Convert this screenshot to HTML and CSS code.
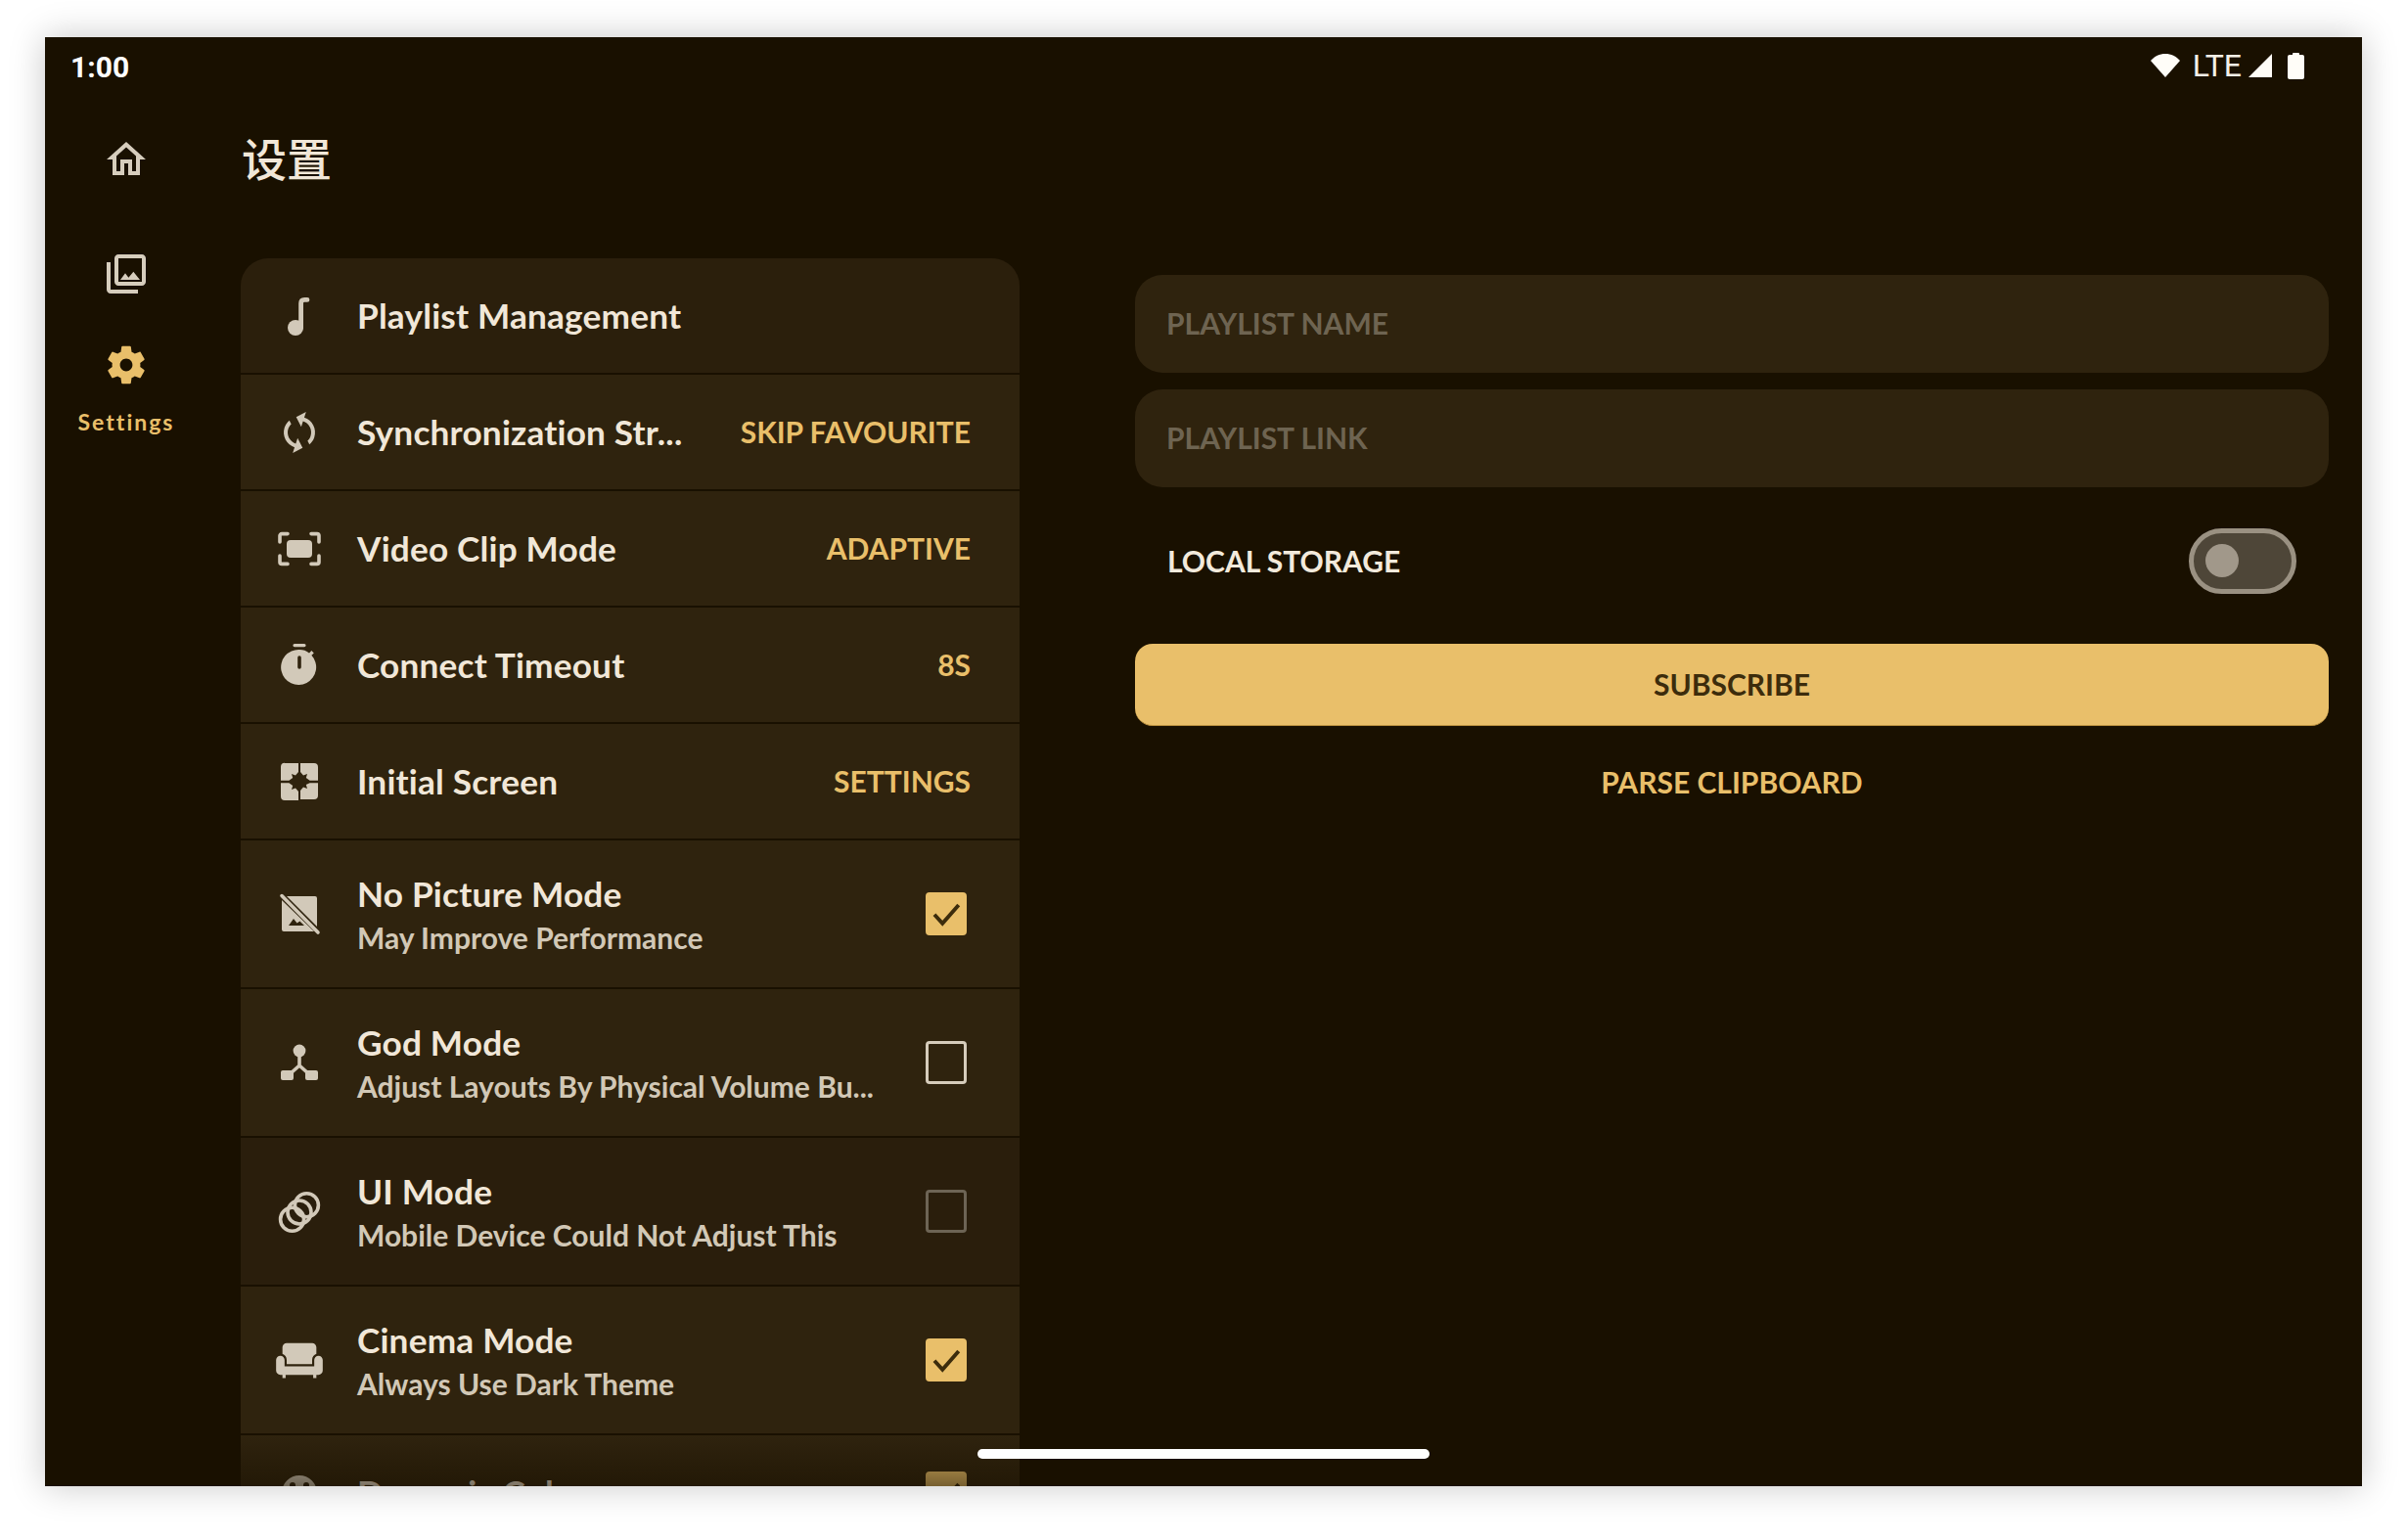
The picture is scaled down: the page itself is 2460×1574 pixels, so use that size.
FILE: index.html
```html
<!DOCTYPE html>
<html lang="zh">
<head>
<meta charset="UTF-8" />
<title>设置</title>
<link rel="stylesheet" href="styles.css">
</head>
<body>
<div class="screen">
  <div class="status">
    <span class="time">1:00</span>
    <div class="status-icons">
      <svg class="wifi" viewBox="0 0 32 26"><path d="M16 25 1 8C5 3.500 10 1 16 1s11 2.500 15 7z"/></svg>
      <span class="lte">LTE</span>
      <svg class="signal" viewBox="0 0 26 26"><path d="M25 1v24H1z"/></svg>
      <svg class="battery" viewBox="0 0 17 28"><path d="M5 2a1 1 0 0 1 1-1h5a1 1 0 0 1 1 1v1h3a2 2 0 0 1 2 2v21a2 2 0 0 1-2 2H2a2 2 0 0 1-2-2V5a2 2 0 0 1 2-2h3z"/></svg>
    </div>
  </div>

  <div class="body">
    <nav class="rail">
      <svg class="rail-icon home" viewBox="0 0 24 24"><path d="M12 5.690l5 4.500V18h-2v-6H9v6H7v-7.810l5-4.500M12 3 2 12h3v8h6v-6h2v6h6v-8h3L12 3z"/></svg>
      <svg class="rail-icon library" viewBox="0 0 24 24"><path d="M20 4v12H8V4h12m0-2H8c-1.100 0-2 .9-2 2v12c0 1.100.9 2 2 2h12c1.100 0 2-.9 2-2V4c0-1.100-.9-2-2-2zm-8.500 9.670 1.690 2.260 2.480-3.100L19 15H9zM2 6v14c0 1.100.9 2 2 2h14v-2H4V6H2z"/></svg>
      <svg class="rail-icon gear" viewBox="0 0 24 24"><path d="M19.140 12.940c.04-.3.06-.61.06-.94 0-.32-.02-.64-.07-.94l2.030-1.580c.18-.14.23-.41.12-.61l-1.920-3.320c-.12-.22-.37-.29-.59-.22l-2.390.96c-.5-.38-1.030-.7-1.620-.94l-.36-2.540c-.04-.24-.24-.41-.48-.41h-3.840c-.24 0-.43.17-.47.41l-.36 2.540c-.59.24-1.130.57-1.620.94l-2.390-.96c-.22-.08-.47 0-.59.22L2.740 8.870c-.12.21-.08.47.12.61l2.030 1.580c-.05.3-.09.63-.09.94s.02.64.07.94l-2.030 1.580c-.18.14-.23.41-.12.61l1.920 3.320c.12.22.37.29.59.22l2.390-.96c.5.38 1.030.7 1.620.94l.36 2.540c.05.24.24.41.48.41h3.840c.24 0 .44-.17.47-.41l.36-2.540c.59-.24 1.130-.56 1.620-.94l2.390.96c.22.08.47 0 .59-.22l1.920-3.320c.12-.22.07-.47-.12-.61l-2.010-1.580zM12 15.200c-1.760 0-3.200-1.440-3.200-3.200s1.440-3.200 3.200-3.200 3.200 1.440 3.200 3.200-1.440 3.200-3.200 3.200z"/></svg>
      <span class="rail-label">Settings</span>
    </nav>

    <main class="content">
      <h1 class="title">设置</h1>
      <div class="columns">
        <section class="card">
          <div class="row first">
            <svg class="row-icon" viewBox="0 0 24 24"><circle cx="10" cy="18" r="4"/><path class="line" d="M12.800 18V5.500c0-1.200.6-1.800 1.800-1.800h1.400"/></svg>
            <span class="row-title">Playlist Management</span>
          </div>
          <div class="row">
            <svg class="row-icon" viewBox="0 0 24 24"><path transform="rotate(18 12 12)" d="M12 4V1L8 5l4 4V6c3.310 0 6 2.690 6 6 0 1.010-.25 1.970-.7 2.800l1.460 1.460C19.540 15.030 20 13.570 20 12c0-4.420-3.580-8-8-8zm0 14c-3.310 0-6-2.690-6-6 0-1.010.25-1.970.7-2.800L5.240 7.740C4.460 8.970 4 10.430 4 12c0 4.420 3.580 8 8 8v3l4-4-4-4v3z"/></svg>
            <span class="row-title">Synchronization Str...</span>
            <span class="row-value">SKIP FAVOURITE</span>
          </div>
          <div class="row">
            <svg class="row-icon" viewBox="0 0 24 24"><path class="thin" d="M2 8.500V5.300a1 1 0 0 1 1-1h3M18 4.300h3a1 1 0 0 1 1 1v3.200M22 15.500v3.200a1 1 0 0 1-1 1h-3M6 19.700H3a1 1 0 0 1-1-1v-3.200"/><rect x="5.500" y="7.500" width="13" height="9" rx="2"/></svg>
            <span class="row-title">Video Clip Mode</span>
            <span class="row-value">ADAPTIVE</span>
          </div>
          <div class="row">
            <svg class="row-icon" viewBox="0 0 24 24"><path fill-rule="evenodd" d="M9.500 1h5a.8.8 0 0 1 0 1.600h-5a.8.8 0 0 1 0-1.600zM12 4c1.900 0 3.600.6 5 1.700l1.200-1.200 1.200 1.200-1.200 1.200A9 9 0 1 1 12 4zm-.9 4v5a.9.9 0 0 0 1.800 0V8a.9.9 0 0 0-1.800 0z"/></svg>
            <span class="row-title">Connect Timeout</span>
            <span class="row-value">8S</span>
          </div>
          <div class="row">
            <svg class="row-icon" viewBox="0 0 24 24"><path d="M4.500 2.500h7v4.500l-1.500 1.700L8 8l.6 2 -1.900 1.400H2.500v-7a2 2 0 0 1 2-2zM12.500 2.500h7a2 2 0 0 1 2 2v6.900h-4.200L15.400 10l.6-2-2 .7-1.500-1.700zM2.500 12.600h4.200l1.900 1.400-.6 2 2-.7 1.500 1.700v4.500h-7a2 2 0 0 1-2-2zM17.300 12.600h4.200v6.400a2 2 0 0 1-2 2h-7v-4.500l1.500-1.700 2 .7-.6-2z"/></svg>
            <span class="row-title">Initial Screen</span>
            <span class="row-value">SETTINGS</span>
          </div>
          <div class="row tall">
            <svg class="row-icon" viewBox="0 0 24 24"><path fill-rule="evenodd" d="M5.500 3H20a1 1 0 0 1 1 1v14.500zM3 5l16.500 16H4a1 1 0 0 1-1-1zM6.500 18h8l-2.300-2.200-1.400 1-1.800-2.300z"/><path class="thin" d="M3 2.800l18.500 18.700"/></svg>
            <div class="row-text">
              <span class="row-title">No Picture Mode</span>
              <span class="row-sub">May Improve Performance</span>
            </div>
            <span class="check on"><svg viewBox="0 0 24 24"><path d="M4 12.500l5.500 6L20.500 6"/></svg></span>
          </div>
          <div class="row tall">
            <svg class="row-icon" viewBox="0 0 24 24"><circle cx="12" cy="6" r="3.200"/><path class="thin" d="M12 8v5.500M12 13.500 7 18M12 13.500l5 4.500"/><rect x="2.500" y="16" width="6.500" height="5" rx="1"/><rect x="15" y="16" width="6.500" height="5" rx="1"/></svg>
            <div class="row-text">
              <span class="row-title">God Mode</span>
              <span class="row-sub">Adjust Layouts By Physical Volume Bu...</span>
            </div>
            <span class="check"></span>
          </div>
          <div class="row tall disabled">
            <svg class="row-icon" viewBox="0 0 24 24"><g class="rings"><circle cx="15.700" cy="8.900" r="6"/><circle cx="12" cy="12.500" r="6"/><circle cx="8.300" cy="16.100" r="6"/></g></svg>
            <div class="row-text">
              <span class="row-title">UI Mode</span>
              <span class="row-sub">Mobile Device Could Not Adjust This</span>
            </div>
            <span class="check dim"></span>
          </div>
          <div class="row tall">
            <svg class="row-icon wide" viewBox="0 0 24 24"><path d="M21 10c-1.100 0-2 .9-2 2v3H5v-3c0-1.100-.9-2-2-2s-2 .9-2 2v5c0 1.100.9 2 2 2h1v1.500h1.500V19h13v1.500H20V19h1c1.100 0 2-.9 2-2v-5c0-1.100-.9-2-2-2zm-3-6H6c-1.100 0-2 .9-2 2v3.150c1.160.41 2 1.520 2 2.820V14h12v-2.030c0-1.300.84-2.400 2-2.820V6c0-1.100-.9-2-2-2z"/></svg>
            <div class="row-text">
              <span class="row-title">Cinema Mode</span>
              <span class="row-sub">Always Use Dark Theme</span>
            </div>
            <span class="check on"><svg viewBox="0 0 24 24"><path d="M4 12.500l5.500 6L20.500 6"/></svg></span>
          </div>
          <div class="row">
            <svg class="row-icon" viewBox="0 0 24 24"><path fill-rule="evenodd" d="M12 3a9 9 0 1 0 0 18 9 9 0 0 0 0-18zM8.500 6.500a1.500 1.500 0 1 1 0 3 1.500 1.500 0 0 1 0-3zm7 0a1.500 1.500 0 1 1 0 3 1.500 1.500 0 0 1 0-3z"/></svg>
            <span class="row-title">Dynamic Color</span>
            <span class="check on"><svg viewBox="0 0 24 24"><path d="M4 12.500l5.500 6L20.500 6"/></svg></span>
          </div>
        </section>

        <section class="form">
          <div class="field">PLAYLIST NAME</div>
          <div class="field">PLAYLIST LINK</div>
          <div class="switch-row">
            <span>LOCAL STORAGE</span>
            <span class="switch"><span class="knob"></span></span>
          </div>
          <button class="subscribe">SUBSCRIBE</button>
          <button class="parse">PARSE CLIPBOARD</button>
        </section>
      </div>
    </main>
  </div>

  <div class="fade"></div>
  <div class="home-bar"></div>
</div>
</body>
</html>
```

FILE: styles.css
```css
html, body {
  margin: 0;
  background: #fff;
}
body {
  height: 1574px;
  overflow: hidden;
  padding: 38px 0 0 46px;
  box-sizing: border-box;
  font-family: "Lato", "Noto Sans CJK SC", sans-serif;
}
.screen {
  position: relative;
  width: 2368px;
  height: 1481px;
  overflow: hidden;
  background: #191000;
  color: #f1e7d8;
  box-shadow: 0 0 34px rgba(0,0,0,0.22);
}
.status {
  height: 58px;
  display: flex;
  align-items: center;
  justify-content: space-between;
  padding: 0 59px 0 26px;
  color: #fff;
  font-family: "Roboto", sans-serif;
}
.time {
  font-size: 30px;
  font-weight: 700;
  margin-top: 2px;
}
.status-icons {
  display: flex;
  align-items: center;
  fill: #fffdf8;
}
.wifi { width: 32px; height: 26px; margin-right: 12px; }
.lte { font-size: 32px; margin-right: 6px; color: #f6f1e8; }
.signal { width: 26px; height: 26px; margin-right: 15px; }
.battery { width: 17px; height: 28px; }

.body {
  display: flex;
}
.rail {
  width: 166px;
  margin-right: 34px;
  flex: none;
  display: flex;
  flex-direction: column;
  align-items: center;
  padding-top: 43px;
}
.rail-icon {
  width: 48px;
  height: 48px;
  fill: #d6cdbd;
}
.library { margin-top: 69px; }
.gear { margin-top: 45px; fill: #e9bf6a; }
.rail-label {
  margin-top: 20px;
  font-size: 23px;
  line-height: 28px;
  font-weight: 700;
  letter-spacing: 2px;
  color: #e9bf6a;
}
.content {
  flex: 1;
  min-width: 0;
}
.title {
  margin: 0 0 34px 1px;
  height: 134px;
  line-height: 134px;
  font-size: 46px;
  font-weight: 500;
  color: #f1e7d8;
}
.columns {
  display: flex;
}
.card {
  width: 796px;
  flex: none;
  border-radius: 28px 28px 0 0;
  overflow: hidden;
}
.row {
  height: 117px;
  margin-bottom: 2px;
  display: flex;
  align-items: center;
  padding: 0 50px 0 36px;
  background: #2f230e;
}
.row.first {
  background: #2b1f0c;
}
.row.tall {
  height: 150px;
}
.row.disabled {
  background: #2a1e0c;
}
.row-icon {
  width: 48px;
  height: 48px;
  margin-right: 35px;
  flex: none;
  fill: #d2c9b9;
}
.row-icon.wide {
  width: 52px;
  height: 52px;
  margin: 0 33px 0 -2px;
}
.row-icon .line {
  fill: none;
  stroke: #d2c9b9;
  stroke-width: 2.400;
  stroke-linecap: round;
}
.row-icon .thin {
  fill: none;
  stroke: #d2c9b9;
  stroke-width: 1.800;
  stroke-linecap: round;
}
.rings {
  fill: none;
  stroke: #d2c9b9;
  stroke-width: 1.800;
}
.row-title {
  font-size: 35.200px;
  font-weight: 700;
  letter-spacing: .2px;
  color: #f1e7d8;
  white-space: nowrap;
  margin-top: -1px;
}
.row-value {
  margin-left: auto;
  font-size: 30px;
  font-weight: 700;
  color: #e9bf6a;
  white-space: nowrap;
  margin-top: -2px;
}
.row-text {
  display: flex;
  flex-direction: column;
  gap: 6px;
  min-width: 0;
}
.row-sub {
  font-size: 30px;
  font-weight: 700;
  color: #d2c8b6;
  white-space: nowrap;
}
.check {
  margin: 0 4px 0 auto;
  width: 42px;
  height: 44px;
  flex: none;
  box-sizing: border-box;
  border: 3px solid #d6ccbb;
  border-radius: 4px;
}
.check.dim {
  border-color: #6d6455;
}
.check.on {
  background: #e9bf6a;
  border-color: #e9bf6a;
}
.check svg {
  display: block;
  width: 36px;
  height: 38px;
  fill: none;
  stroke: #3c2c0c;
  stroke-width: 2.600;
}

.form {
  width: 1220px;
  margin-left: 118px;
  padding-top: 17px;
}
.field {
  height: 100px;
  margin-bottom: 17px;
  border-radius: 28px;
  background: #2f230e;
  display: flex;
  align-items: center;
  padding: 0 0 2px 32px;
  box-sizing: border-box;
  font-size: 30px;
  font-weight: 700;
  color: #6e6451;
}
.switch-row {
  height: 110px;
  margin-top: 20px;
  display: flex;
  align-items: center;
  justify-content: space-between;
  padding: 0 33px 0 33px;
  font-size: 30px;
  font-weight: 700;
  color: #f3eadc;
}
.switch {
  width: 110px;
  height: 67px;
  box-sizing: border-box;
  border: 5px solid #9a9182;
  border-radius: 34px;
  background: #4e4638;
  display: flex;
  align-items: center;
  padding-left: 12px;
}
.knob {
  width: 34px;
  height: 34px;
  border-radius: 50%;
  background: #a1988a;
}
.subscribe, .parse {
  display: block;
  width: 100%;
  border: none;
  font-family: inherit;
  font-size: 30px;
  font-weight: 700;
}
.subscribe {
  height: 84px;
  margin-top: 30px;
  padding-bottom: 2px;
  border-radius: 18px;
  background: #e9bf6a;
  border-bottom: 1px solid #b98f3e;
  color: #3c2c0c;
}
.parse {
  height: 114px;
  background: none;
  color: #e9bf6a;
}
.fade {
  position: absolute;
  left: 0;
  right: 0;
  bottom: 0;
  height: 52px;
  background: linear-gradient(to bottom, rgba(25,16,0,0), rgba(25,16,0,.55));
}
.home-bar {
  position: absolute;
  left: 953px;
  bottom: 28px;
  width: 462px;
  height: 10px;
  border-radius: 5px;
  background: #fff;
}
```
